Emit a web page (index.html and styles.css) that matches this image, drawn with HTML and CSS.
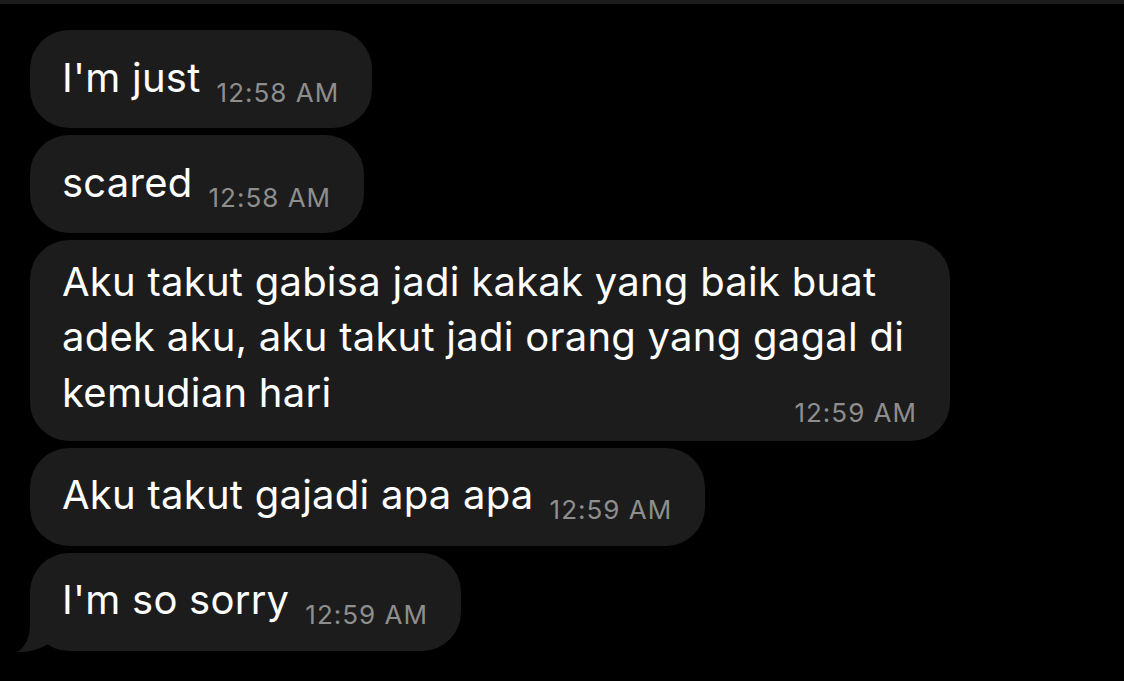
FILE: index.html
```html
<!DOCTYPE html>
<html lang="id">
<head>
<meta charset="utf-8">
<title>Chat</title>
<link rel="stylesheet" href="styles.css">
</head>
<body>
<div class="topbar"></div>
<main class="thread">
  <div class="bubble"><span class="text">I'm just</span><span class="time">12:58 AM</span></div>
  <div class="bubble"><span class="text">scared</span><span class="time">12:58 AM</span></div>
  <div class="bubble long"><span class="text">Aku takut gabisa jadi kakak yang baik buat adek aku, aku takut jadi orang yang gagal di kemudian hari</span><span class="time">12:59 AM</span></div>
  <div class="bubble"><span class="text">Aku takut gajadi apa apa</span><span class="time">12:59 AM</span></div>
  <div class="bubble last"><span class="text">I'm so sorry</span><span class="time">12:59 AM</span>
    <svg class="tail" width="40" height="40" viewBox="0 0 40 40"><path d="M13 0 L13 12 C13 26 8 35 0 40 C12 40.5 24 37 33 31 L40 31 L40 0 Z" fill="#1c1c1c"/></svg>
  </div>
</main>
</body>
</html>
```
FILE: styles.css
```css
html, body {
  margin: 0;
  padding: 0;
  background: #000;
  width: 1124px;
  height: 681px;
  overflow: hidden;
  font-family: "Inter", "Noto Sans", sans-serif;
}
.topbar {
  height: 4px;
  background: #1c1c1c;
}
.thread {
  display: flex;
  flex-direction: column;
  align-items: flex-start;
  gap: 7px;
  padding: 26px 0 0 30px;
}
.bubble {
  position: relative;
  background: #1c1c1c;
  border-radius: 39px;
  padding: 19.5px 33px 22.5px 32px;
  color: #fff;
  font-size: 40px;
  line-height: 56px;
  letter-spacing: 0.25px;
}
.time {
  display: inline-block;
  font-size: 26px;
  line-height: 26px;
  letter-spacing: 1px;
  color: #8e8e8e;
  margin-left: 16px;
  position: relative;
  top: 10px;
}
.long {
  max-width: 855px;
  padding-top: 13.5px;
  padding-bottom: 14.5px;
  line-height: 55.5px;
}
.long .time {
  display: block;
  width: fit-content;
  margin-left: auto;
  margin-top: -20px;
  top: 0;
}
.tail {
  position: absolute;
  left: -13px;
  bottom: -1px;
}
```
